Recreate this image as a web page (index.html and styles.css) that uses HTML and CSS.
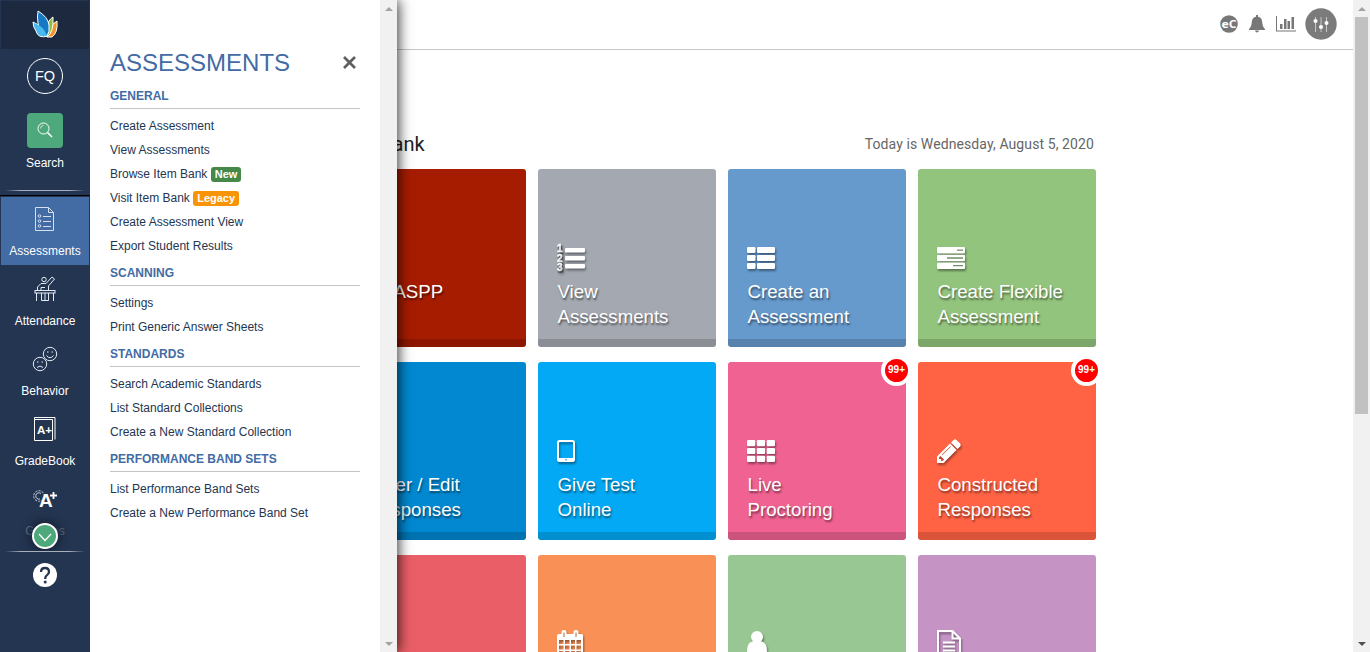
FILE: index.html
```html
<!DOCTYPE html>
<html lang="en">
<head>
<meta charset="utf-8">
<title>Assessments</title>
<link rel="stylesheet" href="styles.css">
</head>
<body>
<div class="app">
  <nav class="rail">
    <div class="brand">
      <svg width="26" height="28" viewBox="0 0 26 28">
        <path d="M20 27Q26 23 25 11Q20 13 17 21L15 27Z" fill="#f5932c" stroke="#fff"/>
        <path d="M15 27Q22 22 21 7Q16 10 14 19Z" fill="#8cc044" stroke="#fff"/>
        <path d="M1 12Q7 14 11 20L16 26Q6 29 4 21Q1 17 1 12Z" fill="#49b5e8" stroke="#fff"/>
        <path d="M6 1Q16 7 17 15Q18 22 15 26Q7 21 6 13Q5 7 6 1Z" fill="#1679c4" stroke="#fff"/>
        <path d="M2 13Q12 16 15 26Q6 25 4 19Z" fill="#4ab9ee"/>
      </svg>
    </div>
    <div class="avatar">FQ</div>
    <div class="search-btn">
      <svg width="16" height="16" viewBox="0 0 16 16" fill="none" stroke="#fff"><circle cx="6.500" cy="6.500" r="5.500"/><path d="M3.500 6.500A3 3 0 0 1 6.500 3.500" stroke-width=".7"/><path d="M10.500 10.500L15 15" stroke-width="1.600"/></svg>
    </div>
    <div class="rail-label">Search</div>
    <div class="rail-line"></div>
    <div class="rail-list">
      <a class="rail-item active">
        <svg width="20" height="26" viewBox="0 0 20 26" fill="none" stroke="#d5dfee"><path d="M.5 1.500H13.500L18.500 6.500V24.500H.5ZM13.500 1.500V6.500H18.500"/><circle cx="4.500" cy="10" r="1.300"/><circle cx="4.500" cy="15" r="1.300"/><circle cx="4.500" cy="20" r="1.300"/><path d="M8 10.500H16M8 15.500H16M8 20.500H16"/></svg>
        <span>Assessments</span>
      </a>
      <a class="rail-item">
        <svg width="22" height="26" viewBox="0 0 22 26" fill="none" stroke="#e4ebf5"><circle cx="10" cy="3.500" r="2.200"/><path d="M3.500 14V11L7 7.500H12L18 1L20.500 3L14.500 10V14M7 14V11.500H11"/><rect x="1" y="14.500" width="20" height="2.500"/><path d="M2.500 17V25M19.500 17V25M7.500 17V24.500H14.500V17M11 17V24"/></svg>
        <span>Attendance</span>
      </a>
      <a class="rail-item">
        <svg width="26" height="26" viewBox="0 0 26 26" fill="none" stroke="#e4ebf5"><circle cx="8" cy="18" r="6.700"/><circle cx="18" cy="8" r="6.700" fill="#243551"/><path d="M5 21.500Q8 18.500 11 21.500M14.500 9.500Q18 14 21.500 9.500"/><path d="M5 16H6.500M9.500 16H11M15 6H16.500M19.500 6H21"/></svg>
        <span>Behavior</span>
      </a>
      <a class="rail-item">
        <svg width="24" height="26" viewBox="0 0 24 26" fill="none" stroke="#fff"><path d="M1.500 3.500H19.500V24.500H1.500ZM1.500 3.500V1.500H22V23.500" /><text x="4" y="18" class="book-text">A+</text></svg>
        <span>GradeBook</span>
      </a>
      <a class="rail-item faded">
        <svg width="26" height="26" viewBox="0 0 26 26" fill="none" stroke="#c8d0dd"><circle cx="7" cy="10" r="5.300" stroke-dasharray="2.200 1.200"/><path d="M9 7.500A3.200 3.200 0 1 0 8 13"/><text x="7" y="20.500" class="grade-a">A</text><path d="M18 9.500H25M21.500 6V13" stroke="#fff" stroke-width="1.800"/></svg>
        <span>Grades</span>
      </a>
      <div class="more">
        <svg width="14" height="9" viewBox="0 0 14 9" fill="none" stroke="#fff" stroke-width="1.300"><path d="M1 1L7 7.500L13 1"/></svg>
      </div>
    </div>
    <div class="rail-line bottom"></div>
    <div class="help"><svg width="24" height="24" viewBox="0 0 24 24"><circle cx="12" cy="12" r="12" fill="#fff"/><path d="M8 9Q8 5 12 5T16 9Q16 11 13.500 12.600Q12.200 13.500 12.200 16" fill="none" stroke="#243551" stroke-width="2.300"/><circle cx="12.200" cy="19" r="1.500" fill="#243551"/></svg></div>
  </nav>

  <aside class="panel">
    <div class="panel-body">
      <div class="panel-head">
        <h1>ASSESSMENTS</h1>
        <svg width="13" height="13" viewBox="0 0 13 13" stroke="#5f5f5f" stroke-width="2.700"><path d="M1 1L12 12M12 1L1 12"/></svg>
      </div>
      <h2>GENERAL</h2>
      <ul>
        <li>Create Assessment</li>
        <li>View Assessments</li>
        <li>Browse Item Bank <b class="tag new">New</b></li>
        <li>Visit Item Bank <b class="tag legacy">Legacy</b></li>
        <li>Create Assessment View</li>
        <li>Export Student Results</li>
      </ul>
      <h2>SCANNING</h2>
      <ul>
        <li>Settings</li>
        <li>Print Generic Answer Sheets</li>
      </ul>
      <h2>STANDARDS</h2>
      <ul>
        <li>Search Academic Standards</li>
        <li>List Standard Collections</li>
        <li>Create a New Standard Collection</li>
      </ul>
      <h2>PERFORMANCE BAND SETS</h2>
      <ul>
        <li>List Performance Band Sets</li>
        <li>Create a New Performance Band Set</li>
      </ul>
    </div>
    <div class="scroll idle"><i class="up"></i><i class="down"></i></div>
  </aside>

  <main class="main">
    <header class="topbar">
      <svg width="18" height="18" viewBox="0 0 18 18"><circle cx="9" cy="9" r="8.800" fill="#777"/><text x="1.500" y="12.700" class="ec" textLength="15" lengthAdjust="spacingAndGlyphs">eC</text></svg>
      <svg width="16" height="18" viewBox="0 0 16 18" fill="#777"><path d="M7 0H9V1.800Q13 2.500 13.200 7Q13.500 12 16 14V15H0V14Q2.500 12 2.800 7Q3 2.500 7 1.800ZM6 15.500H10Q9.500 17.500 8 17.500T6 15.500Z"/></svg>
      <svg width="20" height="16" viewBox="0 0 20 16" fill="#777"><path d="M0 0H1V14.500H20V15.500H0ZM4 8H6.500V13H4ZM8 3H10.500V13H8ZM11.500 5H14V13H11.500ZM15.500 1H18V13H15.500Z"/></svg>
      <svg width="32" height="32" viewBox="0 0 32 32"><circle cx="16" cy="16" r="15.700" fill="#7b7b7b"/><path d="M10.500 9V24M16 9V24M21.500 9V24" stroke="#c8c8c8"/><g fill="#fff"><circle cx="10.500" cy="13" r="2"/><circle cx="16" cy="19" r="2"/><circle cx="21.500" cy="15" r="2"/></g></svg>
    </header>
    <div class="content">
      <div class="content-head"><span class="title">Item Bank</span><span class="date">Today is Wednesday, August 5, 2020</span></div>
      <div class="tiles">
        <div class="tile red"><div class="icon"></div><p>CAASPP</p></div>
        <div class="tile gray"><div class="icon">
          <svg width="28" height="30" viewBox="0 0 28 30" fill="#fff"><rect x="8" y="5" width="20" height="4.500" rx="1"/><rect x="8" y="13" width="20" height="4.500" rx="1"/><rect x="8" y="21" width="20" height="4.500" rx="1"/><text x="0" y="9" class="num">1</text><text x="0" y="18.500" class="num">2</text><text x="0" y="28" class="num">3</text></svg>
        </div><p>View<br>Assessments</p></div>
        <div class="tile steel"><div class="icon">
          <svg width="28" height="22" viewBox="0 0 28 22" fill="#fff"><rect width="8.500" height="6" rx="1.200"/><rect x="10" width="18" height="6" rx="1.200"/><rect y="8" width="8.500" height="6" rx="1.200"/><rect x="10" y="8" width="18" height="6" rx="1.200"/><rect y="16" width="8.500" height="6" rx="1.200"/><rect x="10" y="16" width="18" height="6" rx="1.200"/></svg>
        </div><p>Create an<br>Assessment</p></div>
        <div class="tile green"><div class="icon">
          <svg width="28" height="22" viewBox="0 0 28 22" fill="#fff"><rect width="28" height="6.500" rx="1"/><rect y="7.700" width="28" height="6.500" rx="1"/><rect y="15.500" width="28" height="6.500" rx="1"/><path d="M20 3.200H26M10 11H26M16 18.700H26" stroke="#718f64" stroke-width="1.300"/></svg>
        </div><p>Create Flexible<br>Assessment</p></div>

        <div class="tile blue"><div class="icon"></div><p>Enter / Edit<br>Responses</p></div>
        <div class="tile sky"><div class="icon">
          <svg width="18" height="22" viewBox="0 0 18 22"><rect x="1" y="1" width="16" height="20" rx="1.500" fill="none" stroke="#fff" stroke-width="2"/><path d="M1 18H17V21H1Z" fill="#fff"/><circle cx="9" cy="19.700" r=".8" fill="#0390d0"/></svg>
        </div><p>Give Test<br>Online</p></div>
        <div class="tile pink"><b class="badge">99+</b><div class="icon">
          <svg width="28" height="22" viewBox="0 0 28 22" fill="#fff"><rect width="8.300" height="6.200" rx="1.200"/><rect x="9.800" width="8.300" height="6.200" rx="1.200"/><rect x="19.700" width="8.300" height="6.200" rx="1.200"/><rect y="7.900" width="8.300" height="6.200" rx="1.200"/><rect x="9.800" y="7.900" width="8.300" height="6.200" rx="1.200"/><rect x="19.700" y="7.900" width="8.300" height="6.200" rx="1.200"/><rect y="15.800" width="8.300" height="6.200" rx="1.200"/><rect x="9.800" y="15.800" width="8.300" height="6.200" rx="1.200"/><rect x="19.700" y="15.800" width="8.300" height="6.200" rx="1.200"/></svg>
        </div><p>Live<br>Proctoring</p></div>
        <div class="tile orange"><b class="badge">99+</b><div class="icon">
          <svg width="24" height="24" viewBox="128 128 1536 1536" fill="#fff"><path d="M491 1536l91-91-235-235-91 91v107h128v128h107zm523-928q0-22-22-22-10 0-17 7l-542 542q-7 7-7 17 0 22 22 22 10 0 17-7l542-542q7-7 7-17zm-54-192l416 416-832 832h-416v-416zm683 96q0 53-37 90l-166 166-416-416 166-165q36-38 90-38 53 0 91 38l235 234q37 39 37 91z"/></svg>
        </div><p>Constructed<br>Responses</p></div>

        <div class="tile coral"></div>
        <div class="tile apricot"><div class="icon">
          <svg width="26" height="28" viewBox="0 0 26 28"><path fill="#fff" fill-rule="evenodd" d="M1.500 4H4.500V2Q4.500 0 7 0T9.500 2V4H16.500V2Q16.500 0 19 0T21.500 2V4H24.500Q26 4 26 5.500V26.500Q26 28 24.500 28H1.500Q0 28 0 26.500V5.500Q0 4 1.500 4ZM6.500 2.500H7.500V7H6.500ZM18.500 2.500H19.500V7H18.500ZM2 10V14H6.500V10ZM8 10V14H12.500V10ZM14 10V14H18V10ZM19.500 10V14H24V10ZM2 15.500V19.500H6.500V15.500ZM8 15.500V19.500H12.500V15.500ZM14 15.500V19.500H18V15.500ZM19.500 15.500V19.500H24V15.500ZM2 21V26H6.500V21ZM8 21V26H12.500V21ZM14 21V26H18V21ZM19.500 21V26H24V21Z"/></svg>
        </div></div>
        <div class="tile sage"><div class="icon">
          <svg width="20" height="26" viewBox="0 0 20 26" fill="#fff"><path d="M5 10.500H15Q20 12 20 20Q20 26 16 26H4Q0 26 0 20Q0 12 5 10.500Z"/><circle cx="10" cy="6" r="6"/></svg>
        </div></div>
        <div class="tile mauve"><div class="icon">
          <svg width="24" height="28" viewBox="0 0 24 28" fill="none" stroke="#fff" stroke-width="2"><path d="M1 1H15.500L23 8.500V27H1ZM15.500 1V8.500H23M6 12.500H18M6 16.500H18M6 20.500H18"/></svg>
        </div></div>
      </div>
    </div>
  </main>
  <div class="scroll page"><i class="up"></i><div class="thumb"></div><i class="down"></i></div>
</div>
</body>
</html>
```
FILE: styles.css
```css
* { box-sizing: border-box; }
body { margin: 0; font-family: "Liberation Sans", Arial, sans-serif; background: #fff; overflow: hidden; }
svg { display: block; flex: none; }
h1, h2, ul, p { margin: 0; padding: 0; font-weight: 400; }
.app { display: flex; height: 652px; position: relative; overflow: hidden; }

/* Left navigation rail */
.rail { width: 90px; flex: none; display: flex; flex-direction: column; align-items: center; background: #243551; color: #fff; font-size: 12px; }
.brand { width: 90px; height: 49px; flex: none; background: #1c293e; border: 1px solid #243551; border-bottom: 0; display: flex; justify-content: center; padding-top: 9px; }
.avatar { width: 36px; height: 36px; margin-top: 9px; border: 1px solid #fff; border-radius: 50%; font-size: 14.5px; line-height: 34px; text-align: center; flex: none; }
.search-btn { width: 36px; height: 35px; margin-top: 19px; border-radius: 4px; background: #4da87b; display: flex; align-items: center; justify-content: center; padding-bottom: 2px; flex: none; }
.rail-label { line-height: 14px; margin-top: 8px; }
.rail-line { width: 80px; height: 1px; flex: none; margin-top: 20px; background: linear-gradient(90deg, transparent, #a7afba 20%, #a7afba 80%, transparent); }
.rail-list { position: relative; width: 90px; height: 356px; flex: none; margin-top: 4px; border-top: 1px solid #000; overflow: hidden; }
.rail-item { height: 70px; display: flex; flex-direction: column; align-items: center; padding-top: 10px; gap: 12px; }
.rail-item span { line-height: 14px; }
.rail-item.active { background: #436ba4; border: 1px solid #243551; padding-top: 9px; }
.rail-item.faded span { color: #69758a; }
.book-text { font: bold 11.5px "Liberation Sans", sans-serif; fill: #fff; stroke: none; }
.grade-a { font: bold 19px "Liberation Sans", sans-serif; fill: #fff; stroke: none; }
.more { position: absolute; left: 32px; top: 327px; width: 26px; height: 26px; border-radius: 50%; border: 2px solid #fff; background: #4da87b; box-shadow: 0 0 9px 3px #172338; display: flex; align-items: center; justify-content: center; padding-top: 2px; }
.rail-line.bottom { margin-top: 0; }
.help { margin-top: 11px; }

/* Fly-out menu, drawn above the dashboard */
.panel { position: absolute; left: 90px; top: 0; width: 307px; height: 652px; display: flex; background: #fff; z-index: 2; box-shadow: 2px 0 12px rgba(0, 0, 0, .75); clip-path: inset(0 -24px 0 0); }
.panel-body { width: 290px; padding: 44px 20px 0; }
.panel-head { height: 37px; display: flex; align-items: center; justify-content: space-between; padding-right: 4px; }
.panel h1 { font-size: 24px; line-height: 37px; color: #436ba4; }
.panel h2 { font-size: 12px; font-weight: 700; line-height: 31px; height: 28px; color: #436ba4; border-bottom: 1px solid #c4c4c4; margin-bottom: 5px; }
.panel ul { list-style: none; font-size: 12px; line-height: 24px; color: #243551; }
.panel li { height: 24px; white-space: nowrap; }
.tag { display: inline-block; vertical-align: 0; font-size: 11px; line-height: 15px; height: 15px; padding: 0 4px; border-radius: 3px; color: #fff; }
.tag.new { background: #468847; }
.tag.legacy { background: #f89406; }

/* Scrollbars */
.scroll { width: 17px; flex: none; background: #f1f1f1; display: flex; flex-direction: column; align-items: center; padding: 7px 0 6px; }
.scroll i { border: 4px solid transparent; width: 0; height: 0; }
.scroll .up { border-top: 0; border-bottom-color: #a3a3a3; }
.scroll .down { border-bottom: 0; border-top-color: #a3a3a3; margin-top: auto; }
.scroll.page .down { border-top-color: #505050; }
.thumb { width: 13px; height: 397px; margin-top: 6px; background: #c1c1c1; }

/* Dashboard */
.main { flex: 1; min-width: 0; }
.topbar { height: 50px; border-bottom: 1px solid #c8c8c8; display: flex; align-items: center; justify-content: flex-end; padding: 0 16px 1px 0; gap: 11px; }
.topbar svg:nth-child(4) { margin-left: -2px; }
.ec { font: bold 10px "Open Sans", sans-serif; fill: #fff; }
.content { width: 754px; margin-left: 258px; height: 602px; overflow: hidden; padding: 76px 6px 0 0; }
.content-head { display: flex; justify-content: space-between; align-items: center; height: 36px; padding-right: 2px; font-family: Roboto, sans-serif; }
.title { font-size: 20px; color: #222; margin-left: -13px; }
.date { font-size: 14px; letter-spacing: .1px; color: #666; }
.tiles { display: grid; grid-template-columns: repeat(4, 178px); column-gap: 12px; row-gap: 15px; margin-top: 7px; }
.tile { position: relative; height: 178px; padding: 73px 0 0 19px; border-radius: 3px; border-bottom: 8px solid rgba(0, 0, 0, .15); color: #fff; font-size: 18.67px; line-height: 25px; text-shadow: 1px 2px 2px rgba(0, 0, 0, .5); }
.tile p { padding-left: .5px; }
.icon { height: 32px; margin-bottom: 5px; display: flex; align-items: center; filter: drop-shadow(1px 2px 1px rgba(0, 0, 0, .4)); }
.num { font: bold 10px "Liberation Sans", sans-serif; stroke: #fff; stroke-width: .4px; }
.red { background: #a61c00; }
.gray { background: #a4a8b0; }
.steel { background: #6699cc; }
.green { background: #93c47d; }
.blue { background: #0288d1; }
.sky { background: #03a9f4; }
.pink { background: #f06292; }
.orange { background: #ff6344; }
.coral { background: #ea5f67; }
.apricot { background: #f99157; }
.sage { background: #99c794; }
.mauve { background: #c594c5; }
.badge { position: absolute; right: -6px; top: -7px; width: 31px; height: 31px; border: 4px solid #fff; border-radius: 50%; background: #f00; font-size: 10px; line-height: 22px; text-align: center; text-shadow: none; }
```
